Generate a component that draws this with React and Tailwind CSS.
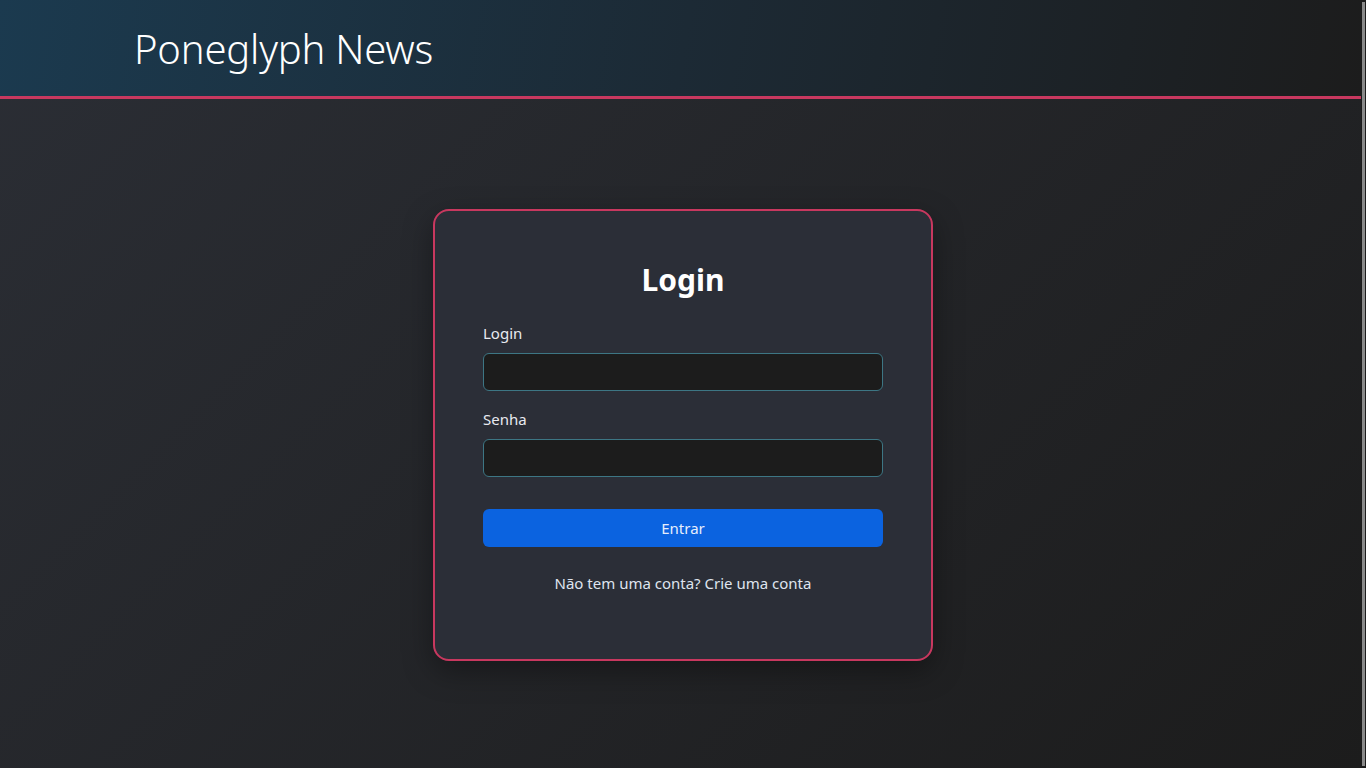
import React from 'react';

const font = { fontFamily: '"Noto Sans", "Open Sans", sans-serif' };

export default function App() {
  return (
    <div style={font} className="relative min-h-screen w-full flex flex-col bg-[linear-gradient(135deg,#2b2e35_0%,#1c1c1c_100%)]">
      <header className="h-[99px] border-b-[3px] border-[#c8385f] bg-[linear-gradient(100deg,#1b3a4f_0%,#1c2a35_50%,#1c1c1c_100%)] flex items-center px-[134px]">
        <h1 className="text-[40px] font-light text-white tracking-[-0.2px] leading-none mt-[2px]">Poneglyph News</h1>
      </header>

      <main className="flex-1 flex items-center justify-center pt-[3px]">
        <div className="w-[500px] h-[452px] rounded-2xl border-2 border-[#c8385f] bg-[#2b2e37] shadow-[0_10px_30px_rgba(0,0,0,0.35)] px-[48px] pt-[48px]">
          <h2 className="text-center text-[30px] font-bold text-white leading-[40px] mt-[1px]">Login</h2>

          <form className="mt-[23px] flex flex-col">
            <label className="text-[15px] text-[#e8eaf0] leading-[20px]">Login</label>
            <input className="mt-[10px] h-[38px] w-full rounded-md border border-[#3d7684] bg-[#1c1c1c] outline-none" />

            <label className="mt-[18px] text-[15px] text-[#e8eaf0] leading-[20px]">Senha</label>
            <input type="password" className="mt-[10px] h-[38px] w-full rounded-md border border-[#3d7684] bg-[#1c1c1c] outline-none" />

            <button type="button" className="mt-[32px] h-[38px] w-full rounded-md bg-[#0b63e0] text-[15px] text-[#e6eefc]">Entrar</button>

            <p className="mt-[26px] text-center text-[15px] text-[#dfe4ee] leading-[20px]">
              Não tem uma conta? <a className="text-[#dfe4ee]">Crie uma conta</a>
            </p>
          </form>
        </div>
      </main>

      {/* thin scrollbar on the right edge */}
      <div className="fixed top-0 right-0 h-screen w-[5px] bg-[#1c1c1c] flex flex-col py-[2px]">
        <div className="flex-1 ml-[1px] w-[3px] bg-[#8a8a8a]"></div>
      </div>
    </div>
  );
}
